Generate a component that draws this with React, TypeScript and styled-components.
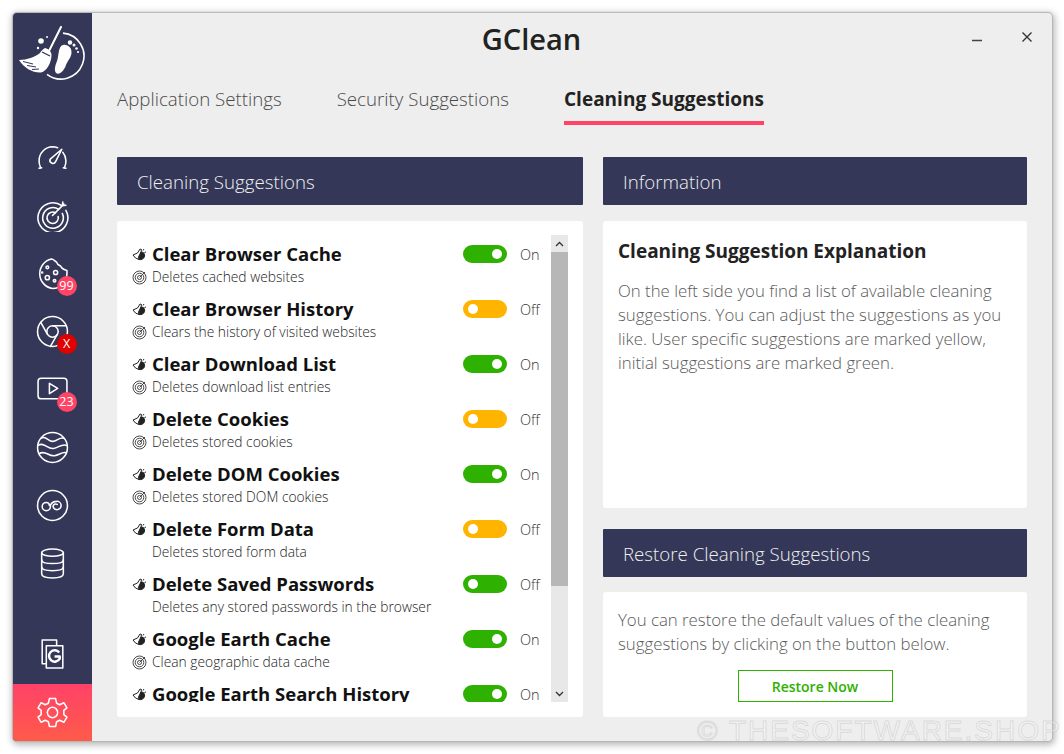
import React from 'react';
import styled, { createGlobalStyle } from 'styled-components';

const GlobalStyle = createGlobalStyle`
  html, body {
    margin: 0;
    padding: 0;
    background: #fff;
    font-family: "Open Sans", "Liberation Sans", sans-serif;
  }
  * { box-sizing: border-box; }
`;

const Page = styled.div`
  width: 1064px;
  height: 754px;
  padding: 13px 12px 13px 13px;
  position: relative;
  overflow: hidden;
`;

const AppWindow = styled.div`
  width: 1039px;
  height: 728px;
  display: flex;
  border-radius: 4px;
  overflow: hidden;
  background: #eeeeee;
  box-shadow: 0 0 1px 1px #b5b5b5, 1px 2px 7px 2px rgba(0, 0, 0, .28);
`;

const Sidebar = styled.aside`
  width: 79px;
  flex: none;
  display: flex;
  flex-direction: column;
  align-items: center;
  background: #343757;
`;

const Logo = styled.div`
  height: 124px;
  width: 100%;
  padding: 13px 0 0 5px;
`;

const Nav = styled.nav`
  display: flex;
  flex-direction: column;
  align-items: center;
  gap: 18px;
  flex: 1;
`;

const NavItem = styled.div`
  position: relative;
  width: 40px;
  height: 40px;
  display: flex;
  align-items: center;
  justify-content: center;
`;

const Badge = styled.span<{ $tone?: string }>`
  position: absolute;
  left: 24px;
  top: 23px;
  width: 20px;
  height: 20px;
  border-radius: 50%;
  background: ${(p) => p.$tone || '#ff4466'};
  color: #fff;
  font-size: 12.5px;
  line-height: 20px;
  text-align: center;
`;

const SettingsButton = styled.div`
  width: 100%;
  height: 57px;
  margin-top: 11px;
  display: flex;
  align-items: center;
  justify-content: center;
  background: linear-gradient(180deg, #ff4268 0%, #ff5a4a 100%);
`;

const Main = styled.main`
  flex: 1;
  min-width: 0;
  position: relative;
  padding: 0 25px 24px 25px;
  display: flex;
  flex-direction: column;
`;

const TitleBar = styled.div`
  height: 50px;
  margin-bottom: 2px;
  padding-right: 56px;
  display: flex;
  align-items: center;
  justify-content: center;
  margin-left: -25px;
`;

const AppTitle = styled.h1`
  margin: 0;
  font-size: 29px;
  font-weight: 600;
  color: #222;
`;

const WindowControls = styled.div`
  position: absolute;
  top: 17px;
  right: 19px;
  display: flex;
  gap: 38px;
  align-items: flex-start;
`;

const Tabs = styled.div`
  display: flex;
  gap: 55px;
  height: 60px;
`;

const Tab = styled.div<{ $active?: boolean }>`
  height: 60px;
  padding-top: 20px;
  font-size: ${(p) => (p.$active ? '19px' : '18.7px')};
  line-height: 28px;
  font-weight: ${(p) => (p.$active ? 700 : 300)};
  color: ${(p) => (p.$active ? '#222' : '#4a4a4a')};
  border-bottom: 4px solid ${(p) => (p.$active ? '#ff4466' : 'transparent')};
  white-space: nowrap;
`;

const Columns = styled.div`
  margin-top: 32px;
  flex: 1;
  min-height: 0;
  display: grid;
  grid-template-columns: 466px 424px;
  column-gap: 20px;
`;

const Column = styled.section`
  display: flex;
  flex-direction: column;
  min-height: 0;
`;

const PanelHead = styled.div`
  flex: none;
  height: 48px;
  padding: 1px 0 0 20px;
  display: flex;
  align-items: center;
  background: #343757;
  color: #f0f0f0;
  font-size: 18.7px;
  font-weight: 300;
  border-radius: 1px;
`;

const Card = styled.div<{ $gap?: number }>`
  margin-top: ${(p) => p.$gap ?? 16}px;
  background: #fff;
  border-radius: 3px;
`;

const ListCard = styled(Card)`
  flex: 1;
  min-height: 0;
  padding: 14px 15px 15px 15px;
  display: flex;
`;

const ListViewport = styled.div`
  flex: 1;
  min-width: 0;
  overflow: hidden;
  padding-top: 6px;
`;

const Row = styled.div`
  height: 55px;
  display: grid;
  grid-template-columns: 20px 311px 44px auto;
  grid-template-rows: 26px 20px;
  align-items: center;
`;

const RowTitle = styled.div`
  margin-top: -2px;
  font-size: 18.5px;
  font-weight: 700;
  color: #111;
  white-space: nowrap;
`;

const RowSub = styled.div`
  grid-column: 2 / 5;
  margin-top: -2px;
  font-size: 13.8px;
  font-weight: 300;
  color: #222;
  white-space: nowrap;
`;

const Switch = styled.div<{ $tone: 'green' | 'yellow'; $on: boolean }>`
  width: 44px;
  height: 18px;
  border-radius: 9px;
  padding: 0 5px;
  display: flex;
  align-items: center;
  justify-content: ${(p) => (p.$on ? 'flex-end' : 'flex-start')};
  background: ${(p) => (p.$tone === 'green' ? '#2eb100' : '#ffb400')};
  &::after {
    content: '';
    width: 10px;
    height: 10px;
    border-radius: 50%;
    background: #fff;
  }
`;

const SwitchLabel = styled.span`
  padding-left: 13px;
  font-size: 14.5px;
  font-weight: 300;
  color: #333;
`;

const Scrollbar = styled.div`
  flex: none;
  width: 17px;
  margin-left: 2px;
  display: flex;
  flex-direction: column;
  background: #e8e8e8;
`;

const ScrollArrow = styled.div`
  height: 17px;
  flex: none;
  display: flex;
  align-items: center;
  justify-content: center;
  color: #333;
`;

const ScrollThumb = styled.div`
  height: 334px;
  flex: none;
  background: #b7b7b7;
`;

const ScrollSpace = styled.div`
  flex: 1;
`;

const InfoCard = styled(Card)`
  height: 287px;
  padding: 17px 15px;
`;

const InfoTitle = styled.h2`
  margin: 0 0 15px;
  font-size: 19px;
  line-height: 26px;
  font-weight: 700;
  color: #222;
`;

const BodyText = styled.p`
  margin: 0;
  font-size: 16.8px;
  line-height: 24px;
  font-weight: 300;
  color: #5a5a5a;
  white-space: nowrap;
`;

const RestoreHead = styled(PanelHead)`
  margin-top: 21px;
`;

const RestoreCard = styled(Card)`
  flex: 1;
  min-height: 0;
  padding: 16px 15px 0;
  display: flex;
  flex-direction: column;
`;

const RestoreButton = styled.button`
  align-self: center;
  margin-top: 14px;
  width: 155px;
  height: 32px;
  background: #fff;
  border: 1px solid #2eb100;
  color: #2eb100;
  font-family: inherit;
  font-size: 14px;
  font-weight: 600;
`;

const Watermark = styled.div`
  position: absolute;
  left: 697px;
  top: 716px;
  font-family: "Liberation Sans", sans-serif;
  font-size: 28px;
  line-height: 30px;
  letter-spacing: 2px;
  white-space: nowrap;
  color: rgba(255, 255, 255, .35);
  -webkit-text-stroke: 1px rgba(190, 190, 190, .45);
`;

const Line = (props: React.SVGProps<SVGSVGElement>) => (
  <svg width="33" height="33" viewBox="0 0 32 32" fill="none" stroke="#fff" strokeWidth="1.5" strokeLinecap="round" strokeLinejoin="round" {...props} />
);

// origin of this drawing sits at page (18, 26)
const LogoIcon = () => (
  <svg width="68" height="56" viewBox="0 0 68 56" fill="none">
    <path d="M45 7.100 A23 23 0 1 1 29 48.300" stroke="#fff" strokeWidth="1.6" />
    <path d="M43 1 L31 25" stroke="#fff" strokeWidth="2" strokeLinecap="round" />
    <path d="M27 22 C31 23 34 26 33.500 30 C33 37 29 45 23 46.500 C15 47 6 42 1 34 C9 34 17 31 22 27 C23 25 25 23 27 22 Z" fill="#fff" />
    <path d="M24 26 L32 30" stroke="#343757" strokeWidth="1.300" />
    <path d="M5 35.500 L15 38 M9 39.500 L18 41 M14 43.500 L21 43" stroke="#343757" strokeWidth="1" />
    <circle cx="23" cy="15" r="2.800" fill="#fff" />
    <circle cx="20" cy="22" r="1.200" fill="#fff" />
    <circle cx="29" cy="11" r="1" fill="#fff" />
    <path d="M45 19 C50 18 54 22 53.500 27 C53 32 50 34 48 39 C46 45 42 48.500 39 47.500 C35.500 46 37 40 39 35 C41 30 40 20 45 19 Z" fill="#fff" />
    <circle cx="52" cy="16.500" r="2.200" fill="#fff" />
    <circle cx="56" cy="19" r="1.500" fill="#fff" />
    <circle cx="58.500" cy="22.500" r="1.300" fill="#fff" />
    <circle cx="60" cy="26" r="1.100" fill="#fff" />
  </svg>
);

const GaugeIcon = () => (
  <Line>
    <path d="M4.500 26 A14 14 0 0 1 3 19 A13.500 13.500 0 0 1 16 5.500 A13 13 0 0 1 21 6.500" />
    <path d="M26 11 A13.500 13.500 0 0 1 29 19 A14 14 0 0 1 27.500 26" />
    <path d="M3 26.500 L5.500 26 M26.500 26 L29 26.500" />
    <path d="M25 8 L19 20 A2.800 2.800 0 0 1 13.800 17.500 Z" />
  </Line>
);

const RadarIcon = () => (
  <Line>
    <path d="M25 6.500 A14.500 14.500 0 1 0 29 11" />
    <path d="M22 10 A10 10 0 1 0 25.500 14" />
    <path d="M19 13.500 A5.500 5.500 0 1 0 21.500 17" />
    <path d="M16 16 L27 5 M26 3 L25.500 6.500 L29 6" />
  </Line>
);

const CookieIcon = () => (
  <Line>
    <path d="M15 2 C17 2 18 4 20 5 C21 8 23 8 24 9 C25 12 27 12 30 13 C31 24 24 30.500 16 30.500 A14.500 14.500 0 0 1 15 2 Z" />
    <circle cx="11" cy="10" r="1.300" />
    <circle cx="19" cy="15" r="2" />
    <circle cx="11" cy="20" r="2" />
    <circle cx="18" cy="23" r="1.200" />
    <circle cx="6" cy="15" r=".5" />
  </Line>
);

const ChromeIcon = () => (
  <Line>
    <circle cx="16" cy="16" r="14.500" />
    <circle cx="16" cy="16" r="5.500" />
    <path d="M16 10.500 H29 M11 18.500 L4.500 7 M20.500 19 L14 30.500" />
  </Line>
);

const VideoIcon = () => (
  <Line>
    <path d="M5 5 H27 Q30 5 30 8 V21 Q30 25 27 25 H5 Q2 25 2 22 V8 Q2 5 5 5 Z" />
    <path d="M13 10 L21 15 L13 20 Z" />
  </Line>
);

const WavesIcon = () => (
  <Line>
    <circle cx="16" cy="16" r="14.500" />
    <path d="M5 7 C10 4 12 11 17 10 C21 9 23 6 27 7" />
    <path d="M2 14 C8 10 11 18 17 17 C22 16 25 12 30 14" />
    <path d="M3 22 C9 18 12 25 18 24 C23 23 25 20 29.500 21" />
  </Line>
);

const GlassesIcon = () => (
  <Line>
    <circle cx="16" cy="16" r="14.500" />
    <path d="M14 17 A4 4 0 1 1 10 13 A3 3 0 0 1 13 16" />
    <path d="M14 16 C15 13 17 12 20 12 A4 4 0 1 1 16.500 17 A2.500 2.500 0 0 1 20.500 15" />
  </Line>
);

const DatabaseIcon = () => (
  <Line>
    <ellipse cx="16" cy="5.500" rx="10.500" ry="3.500" />
    <path d="M5.500 5.500 V26 C5.500 28.500 10 30 16 30 C22 30 26.500 28.500 26.500 26 V5.500" />
    <path d="M5.500 12.500 C5.500 15 10 16 16 16 C22 16 26.500 15 26.500 12.500" />
    <path d="M5.500 19.500 C5.500 22 10 23 16 23 C22 23 26.500 22 26.500 19.500" />
  </Line>
);

const PagesIcon = () => (
  <Line>
    <path d="M9 26 H6 V3 H20 V8" />
    <path d="M10 8.500 H26 V30 H10 Z" />
    <path d="M22.500 15 A5.500 5.500 0 1 0 23 21 V19 H18" strokeWidth="2.400" strokeLinecap="butt" />
  </Line>
);

const GearIcon = () => (
  <Line>
    <path d="M13 2.500 H19 L20 7 L23 8.500 L27 6.500 L30 11.500 L27 14 V18 L30 20.500 L27 25.500 L23 23.500 L20 25 L19 29.500 H13 L12 25 L9 23.500 L5 25.500 L2 20.500 L5 18 V14 L2 11.500 L5 6.500 L9 8.500 L12 7 Z" />
    <circle cx="16" cy="16" r="5" />
  </Line>
);

const HandIcon = () => (
  <svg width="15" height="14" viewBox="0 0 15 14" fill="none" stroke="#222" strokeWidth="1">
    <path d="M1 8 L5.500 6 L8 2 L9.500 2.500 L9 5 L6.500 10 L7 12.500 L3.500 11 Z" />
    <path d="M9 5 C12 5 13 7 12.500 9.500 C12 12 9 13 7 12.500 L7.500 9 Z" fill="#222" />
    <path d="M12 2 L11 3.500 M14 5 L12.500 5.500" />
  </svg>
);

const TargetIcon = () => (
  <svg width="15" height="15" viewBox="0 0 15 15" fill="none" stroke="#333" strokeWidth=".9">
    <circle cx="7.500" cy="7.500" r="6.500" />
    <circle cx="7.500" cy="7.500" r="4.300" />
    <circle cx="7.500" cy="7.500" r="2" />
    <path d="M7.500 7.500 L13 2" />
  </svg>
);

const navItems = [
  { icon: <GaugeIcon /> },
  { icon: <RadarIcon /> },
  { icon: <CookieIcon />, badge: '99' },
  { icon: <ChromeIcon />, badge: 'X', tone: '#e00000' },
  { icon: <VideoIcon />, badge: '23' },
  { icon: <WavesIcon /> },
  { icon: <GlassesIcon /> },
  { icon: <DatabaseIcon /> }
];

const suggestions = [
  { title: 'Clear Browser Cache', sub: 'Deletes cached websites', tone: 'green', on: true, label: 'On', target: true },
  { title: 'Clear Browser History', sub: 'Clears the history of visited websites', tone: 'yellow', on: false, label: 'Off', target: true },
  { title: 'Clear Download List', sub: 'Deletes download list entries', tone: 'green', on: true, label: 'On', target: true },
  { title: 'Delete Cookies', sub: 'Deletes stored cookies', tone: 'yellow', on: false, label: 'Off', target: true },
  { title: 'Delete DOM Cookies', sub: 'Deletes stored DOM cookies', tone: 'green', on: true, label: 'On', target: true },
  { title: 'Delete Form Data', sub: 'Deletes stored form data', tone: 'yellow', on: false, label: 'Off', target: false },
  { title: 'Delete Saved Passwords', sub: 'Deletes any stored passwords in the browser', tone: 'green', on: false, label: 'Off', target: false },
  { title: 'Google Earth Cache', sub: 'Clean geographic data cache', tone: 'green', on: true, label: 'On', target: true },
  { title: 'Google Earth Search History', sub: '', tone: 'green', on: true, label: 'On', target: false }
] as const;

export default function App() {
  return (
    <Page>
      <GlobalStyle />
      <AppWindow>
        <Sidebar>
          <Logo><LogoIcon /></Logo>
          <Nav>
            {navItems.map((item, i) => (
              <NavItem key={i}>
                {item.icon}
                {item.badge && <Badge $tone={item.tone}>{item.badge}</Badge>}
              </NavItem>
            ))}
          </Nav>
          <NavItem><PagesIcon /></NavItem>
          <SettingsButton><GearIcon /></SettingsButton>
        </Sidebar>
        <Main>
          <TitleBar><AppTitle>GClean</AppTitle></TitleBar>
          <WindowControls>
            <svg width="12" height="20" viewBox="0 0 12 20"><path d="M1 10.500 H11" stroke="#444" strokeWidth="1.300" /></svg>
            <svg width="12" height="20" viewBox="0 0 12 20"><path d="M1.500 2.500 L10.500 11.500 M10.500 2.500 L1.500 11.500" stroke="#333" strokeWidth="1.400" /></svg>
          </WindowControls>
          <Tabs>
            <Tab>Application Settings</Tab>
            <Tab>Security Suggestions</Tab>
            <Tab $active>Cleaning Suggestions</Tab>
          </Tabs>
          <Columns>
            <Column>
              <PanelHead>Cleaning Suggestions</PanelHead>
              <ListCard>
                <ListViewport>
                  {suggestions.map((s) => (
                    <Row key={s.title}>
                      <HandIcon />
                      <RowTitle>{s.title}</RowTitle>
                      <Switch $tone={s.tone} $on={s.on} />
                      <SwitchLabel>{s.label}</SwitchLabel>
                      {s.target ? <TargetIcon /> : <span />}
                      {s.sub && <RowSub>{s.sub}</RowSub>}
                    </Row>
                  ))}
                </ListViewport>
                <Scrollbar>
                  <ScrollArrow>
                    <svg width="9" height="6" viewBox="0 0 9 6" fill="none" stroke="currentColor" strokeWidth="1.300"><path d="M1 5 L4.500 1.500 L8 5" /></svg>
                  </ScrollArrow>
                  <ScrollThumb />
                  <ScrollSpace />
                  <ScrollArrow>
                    <svg width="9" height="6" viewBox="0 0 9 6" fill="none" stroke="currentColor" strokeWidth="1.300"><path d="M1 1 L4.500 4.500 L8 1" /></svg>
                  </ScrollArrow>
                </Scrollbar>
              </ListCard>
            </Column>
            <Column>
              <PanelHead>Information</PanelHead>
              <InfoCard>
                <InfoTitle>Cleaning Suggestion Explanation</InfoTitle>
                <BodyText>
                  On the left side you find a list of available cleaning<br />
                  suggestions. You can adjust the suggestions as you<br />
                  like. User specific suggestions are marked yellow,<br />
                  initial suggestions are marked green.
                </BodyText>
              </InfoCard>
              <RestoreHead>Restore Cleaning Suggestions</RestoreHead>
              <RestoreCard $gap={15}>
                <BodyText>
                  You can restore the default values of the cleaning<br />
                  suggestions by clicking on the button below.
                </BodyText>
                <RestoreButton>Restore Now</RestoreButton>
              </RestoreCard>
            </Column>
          </Columns>
        </Main>
      </AppWindow>
      <Watermark>© THESOFTWARE.SHOP</Watermark>
    </Page>
  );
}
